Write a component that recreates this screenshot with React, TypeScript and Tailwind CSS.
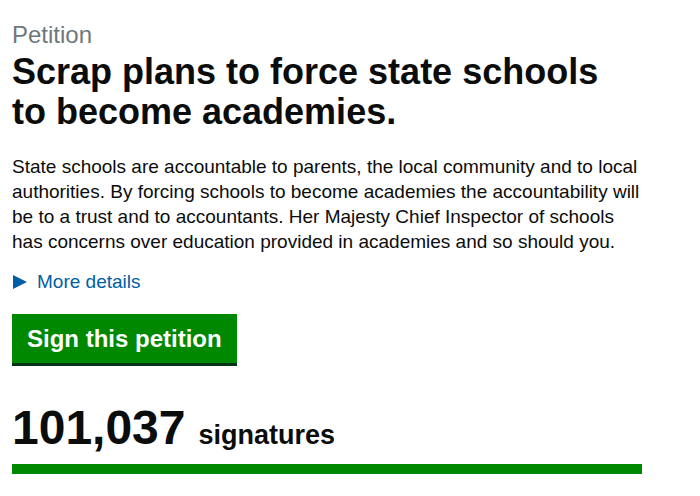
import React from "react";

export default function App() {
  return (
    <div className="min-h-[496px] bg-white" style={{ fontFamily: '"Liberation Sans", Arial, sans-serif' }}>
      <div className="ml-3 w-[630px] pt-[20px]">
        <span className="block text-[24px] leading-[30px] text-[#6f777b]">Petition</span>
        <h1 className="mt-[2px] text-[36px] font-bold leading-[40px] text-[#0b0c0c]">
          Scrap plans to force state schools to become academies.
        </h1>
        <p className="mt-[22px] text-[19px] leading-[25px] text-[#0b0c0c]">
          State schools are accountable to parents, the local community and to local authorities. By forcing schools to become academies the accountability will be to a trust and to accountants. Her Majesty Chief Inspector of schools has concerns over education provided in academies and so should you.
        </p>
        <div className="mt-[15px] flex items-center text-[19px] leading-[25px] text-[#005ea5]">
          <span className="inline-block mr-[10px] ml-[1px] h-0 w-0 border-y-[7px] border-l-[14px] border-y-transparent border-l-[#005ea5]" />
          <span>More details</span>
        </div>
        <button className="mt-[20px] block h-[49px] bg-[#008800] px-[15px] text-[24px] font-bold leading-[30px] text-white shadow-[0_3px_0_#003618]">
          Sign this petition
        </button>
        <div className="mt-[40px] flex items-baseline text-[#0b0c0c]">
          <span className="text-[48px] font-bold leading-[50px]">101,037</span>
          <span className="ml-[13px] text-[27px] font-bold leading-[30px]">signatures</span>
        </div>
        <div className="mt-[11px] h-[10px] w-full bg-[#008800]" />
      </div>
    </div>
  );
}
